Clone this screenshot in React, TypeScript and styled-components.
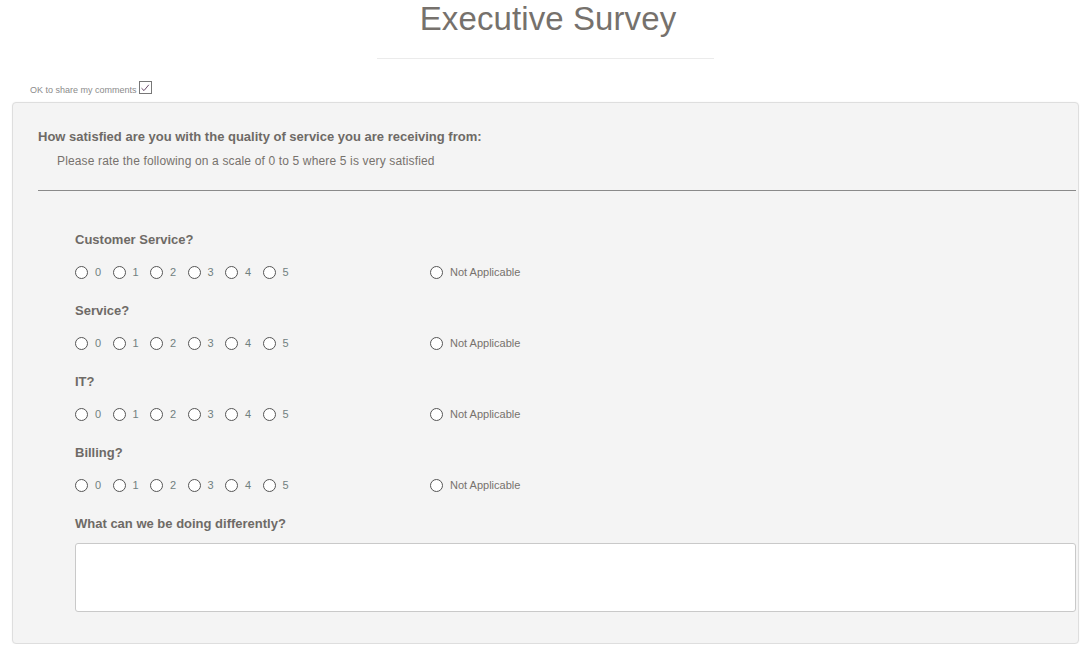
import React from "react";
import styled, { createGlobalStyle } from "styled-components";

const Global = createGlobalStyle`
  html, body { margin: 0; padding: 0; background: #fff; }
  body { font-family: "Liberation Sans", Arial, sans-serif; color: #6e6a66; }
`;

const Page = styled.div`
  display: flex;
  flex-direction: column;
  padding: 0 10px 0 12px;
`;

const Header = styled.header`
  display: flex;
  flex-direction: column;
  align-items: center;
`;

const Title = styled.h1`
  margin: -1px 0 0;
  font-weight: 400;
  font-size: 33px;
  line-height: 40px;
  color: #76716c;
  letter-spacing: 0.1px;
  padding-left: 5px;
`;

const TitleRule = styled.hr`
  width: 337px;
  margin: 19px 0 0;
  border: 0;
  border-top: 1px solid #ebebeb;
`;

const ShareRow = styled.label`
  display: flex;
  align-items: flex-end;
  gap: 2px;
  margin: 22px 0 7px 18px;
  font-size: 9px;
  color: #8b8b8b;
  line-height: 10px;
`;

const Check = styled.span`
  width: 11px;
  height: 11px;
  border: 1px solid #777;
  background: #fff;
  display: inline-flex;
  align-items: center;
  justify-content: center;
  margin-bottom: 1px;
`;

const Panel = styled.section`
  background: #f4f4f4;
  border: 1px solid #dedede;
  border-radius: 4px;
  padding: 25px 2px 31px 25px;
  box-shadow: 0 0 2px rgba(0,0,0,0.05);
`;

const Heading = styled.h2`
  margin: 0;
  font-size: 13px;
  font-weight: 700;
  line-height: 18px;
  color: #6e6a66;
`;

const Sub = styled.p`
  margin: 7px 0 0 19px;
  font-size: 12px;
  line-height: 16px;
  color: #77726d;
  letter-spacing: 0.15px;
`;

const Divider = styled.hr`
  margin: 21px 0 0;
  border: 0;
  border-top: 1px solid #8a8a8a;
`;

const Questions = styled.div`
  display: flex;
  flex-direction: column;
  padding: 40px 0 0 37px;
`;

const Question = styled.div`
  display: flex;
  flex-direction: column;
  height: 71px;
`;

const QLabel = styled.div`
  font-size: 13px;
  font-weight: 700;
  line-height: 18px;
  color: #6e6a66;
`;

const Options = styled.div`
  display: flex;
  align-items: center;
  margin-top: 15px;
  height: 16px;
`;

const Scale = styled.div`
  display: flex;
  align-items: center;
  width: 355px;
`;

const Opt = styled.label`
  display: flex;
  align-items: center;
  gap: 7px;
  width: 37.5px;
  font-size: 11px;
  color: #71807f;
`;

const NAOpt = styled(Opt)`
  width: auto;
  color: #77726d;
`;

const Radio = styled.span`
  width: 11px;
  height: 11px;
  border: 1px solid #555;
  border-radius: 50%;
  background: #fff;
  flex: none;
`;

const TextArea = styled.textarea`
  display: block;
  box-sizing: border-box;
  width: 100%;
  height: 69px;
  margin-top: 10px;
  border: 1px solid #c9c9c9;
  border-radius: 3px;
  background: #fff;
  resize: none;
  font-family: inherit;
`;

const items = ["Customer Service?", "Service?", "IT?", "Billing?"];

export default function App() {
  return (
    <>
      <Global />
      <Page>
        <Header>
          <Title>Executive Survey</Title>
          <TitleRule />
        </Header>
        <ShareRow>
          OK to share my comments
          <Check>
            <svg width="10" height="10" viewBox="0 0 10 10">
              <path d="M1.5 5.2 L4 7.6 L8.8 1.8" fill="none" stroke="#6a4a6a" strokeWidth="1" />
            </svg>
          </Check>
        </ShareRow>
        <Panel>
          <Heading>How satisfied are you with the quality of service you are receiving from:</Heading>
          <Sub>Please rate the following on a scale of 0 to 5 where 5 is very satisfied</Sub>
          <Divider />
          <Questions>
            {items.map((q) => (
              <Question key={q}>
                <QLabel>{q}</QLabel>
                <Options>
                  <Scale>
                    {[0, 1, 2, 3, 4, 5].map((n) => (
                      <Opt key={n}>
                        <Radio />
                        {n}
                      </Opt>
                    ))}
                  </Scale>
                  <NAOpt>
                    <Radio />
                    Not Applicable
                  </NAOpt>
                </Options>
              </Question>
            ))}
            <QLabel>What can we be doing differently?</QLabel>
            <TextArea />
          </Questions>
        </Panel>
      </Page>
    </>
  );
}
